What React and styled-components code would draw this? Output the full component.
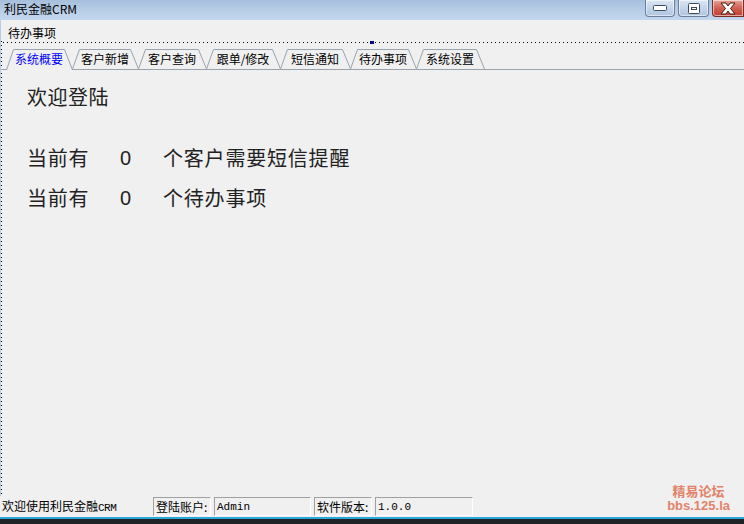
import React from 'react';
import styled, { createGlobalStyle } from 'styled-components';

const GlobalStyle = createGlobalStyle`
  html, body {
    margin: 0;
    padding: 0;
    background: #f0f0f0;
  }
  * {
    box-sizing: border-box;
  }
`;

const tabs = [
  { label: '系统概要', w: 66 },
  { label: '客户新增', w: 66 },
  { label: '客户查询', w: 68 },
  { label: '跟单/修改', w: 74 },
  { label: '短信通知', w: 70 },
  { label: '待办事项', w: 66 },
  { label: '系统设置', w: 68 },
];

const Tab = ({ label, w, active }) => {
  const h = active ? 21 : 20;
  return (
    <TabItem $w={w} $active={active}>
      <TabOutline width={w + 1} height={h} viewBox={`0 0 ${w + 1} ${h}`}>
        <path
          d={`M0.5 ${h} L7.5 0.5 L${w - 7.5} 0.5 L${w + 0.5} ${h}`}
          fill="#f0f0f0"
          stroke="#98a3ae"
          strokeWidth="1"
        />
      </TabOutline>
      <TabLabel $active={active}>{label}</TabLabel>
    </TabItem>
  );
};

const App = () => {
  return (
    <Window>
      <GlobalStyle />
      <TitleBar>
        <TitleText>利民金融CRM</TitleText>
        <Controls>
          <CtrlButton $w={30}>
            <svg width="14" height="6" viewBox="0 0 14 6">
              <rect x="0.5" y="0.5" width="13" height="5" rx="1" fill="#fff" stroke="#3c4a5c" />
            </svg>
          </CtrlButton>
          <CtrlButton $w={31}>
            <svg width="12" height="11" viewBox="0 0 12 11">
              <rect x="0.5" y="0.5" width="11" height="10" rx="1" fill="#fff" stroke="#3c4a5c" />
              <rect x="3" y="4" width="6" height="3" fill="#3c4a5c" />
              <rect x="4" y="5" width="4" height="1" fill="#fff" />
            </svg>
          </CtrlButton>
          <CloseButton>
            <svg width="18" height="13" viewBox="0 0 18 13">
              <path
                d="M2 1 L7 1 L9 4 L11 1 L16 1 L11.5 6.5 L16 12 L11 12 L9 9 L7 12 L2 12 L6.5 6.5 Z"
                fill="#fff"
                stroke="#4a1a14"
                strokeWidth="1"
                strokeLinejoin="round"
              />
            </svg>
          </CloseButton>
        </Controls>
      </TitleBar>

      <Body>
        <MenuBar>
          <MenuItem>待办事项</MenuItem>
        </MenuBar>
        <DotRule>
          <Grip />
        </DotRule>
        <TabStrip>
          {tabs.map((t, i) => (
            <Tab key={t.label} label={t.label} w={t.w} active={i === 0} />
          ))}
        </TabStrip>
        <Page>
          <Heading>欢迎登陆</Heading>
          <InfoList>
            <InfoRow>
              <Lead>当前有</Lead>
              <Count>0</Count>
              <span>个客户需要短信提醒</span>
            </InfoRow>
            <InfoRow>
              <Lead>当前有</Lead>
              <Count>0</Count>
              <span>个待办事项</span>
            </InfoRow>
          </InfoList>
        </Page>
      </Body>

      <StatusBar>
        <StatusText>欢迎使用利民金融<Mono>CRM</Mono></StatusText>
        <Panel $w={58}>登陆账户:</Panel>
        <Panel $w={97} $mono>Admin</Panel>
        <Panel $w={58}>软件版本:</Panel>
        <Panel $w={98} $mono>1.0.0</Panel>
      </StatusBar>
      <TaskEdge />

      <Watermark>{'精易论坛\nbbs.125.la'}</Watermark>
    </Window>
  );
};

export default App;

const Window = styled.div`
  position: relative;
  width: 744px;
  height: 524px;
  display: flex;
  flex-direction: column;
  background: #f0f0f0;
  font-family: "Noto Sans CJK SC", "Liberation Sans", sans-serif;
  color: #000;
  overflow: hidden;
`;

const TitleBar = styled.div`
  height: 20px;
  display: flex;
  align-items: flex-start;
  justify-content: space-between;
  background: linear-gradient(to bottom, #a6bfdc 0%, #b7cde7 50%, #c3d7ee 100%);
`;

const TitleText = styled.div`
  font-size: 12px;
  line-height: 18px;
  padding-left: 4px;
  color: #000;
`;

const Controls = styled.div`
  display: flex;
  gap: 3px;
`;

const CtrlButton = styled.div`
  width: ${p => p.$w}px;
  height: 17px;
  display: flex;
  align-items: center;
  justify-content: center;
  border: 1px solid #6d7f98;
  border-top: none;
  border-radius: 0 0 4px 4px;
  background: linear-gradient(to bottom, #dbe6f3 0%, #c4d5ea 50%, #aec4df 100%);
  box-shadow: inset 0 0 0 1px rgba(255, 255, 255, 0.55);
`;

const CloseButton = styled(CtrlButton).attrs({ $w: 32 })`
  border-color: #7a2a22;
  border-radius: 0 0 0 4px;
  background: linear-gradient(to bottom, #e8a598 0%, #d06050 50%, #c04030 100%);
`;

const Body = styled.div`
  flex: 1;
  display: flex;
  flex-direction: column;
  border-left: 1px solid #b7cde6;
  position: relative;
  background:
    repeating-linear-gradient(to bottom, #000 0 1px, transparent 1px 4px) 0 21px / 1px calc(100% - 22px) no-repeat,
    #f0f0f0;
`;

const MenuBar = styled.div`
  height: 21px;
  display: flex;
  align-items: flex-end;
  padding-left: 7px;
`;

const MenuItem = styled.div`
  font-size: 12px;
  line-height: 16px;
`;

const DotRule = styled.div`
  height: 1px;
  margin-top: 1px;
  background: repeating-linear-gradient(to right, transparent 0 2px, #000 2px 3px, transparent 3px 4px);
  display: flex;
  justify-content: flex-start;
  padding-left: 369px;
`;

const Grip = styled.div`
  width: 4px;
  height: 3px;
  margin-top: -1px;
  background: #000080;
`;

const TabStrip = styled.div`
  height: 27px;
  display: flex;
  align-items: flex-end;
  padding-left: 5px;
  border-bottom: 1px solid #98a3ae;
`;

const TabItem = styled.div`
  position: relative;
  width: ${p => p.$w}px;
  height: ${p => (p.$active ? 21 : 20)}px;
  margin-bottom: ${p => (p.$active ? -1 : 0)}px;
  display: flex;
  align-items: flex-start;
  justify-content: center;
  z-index: ${p => (p.$active ? 2 : 1)};
`;

const TabOutline = styled.svg`
  position: absolute;
  left: 0;
  top: 0;
  overflow: visible;
`;

const TabLabel = styled.span`
  position: relative;
  font-size: 12px;
  line-height: 18px;
  padding-top: 1px;
  color: ${p => (p.$active ? '#0000ff' : '#000')};
`;

const Page = styled.div`
  flex: 1;
  padding: 14px 0 0 26px;
`;

const Heading = styled.div`
  font-size: 20px;
  line-height: 26px;
  letter-spacing: 0.5px;
  color: #222;
`;

const InfoList = styled.div`
  margin-top: 35px;
  display: flex;
  flex-direction: column;
  gap: 14px;
`;

const InfoRow = styled.div`
  display: flex;
  font-size: 20px;
  line-height: 26px;
  letter-spacing: 0.8px;
  color: #222;
`;

const Lead = styled.span`
  width: 93px;
`;

const Count = styled.span`
  width: 43px;
  font-family: "Liberation Sans", sans-serif;
`;

const StatusBar = styled.div`
  height: 21px;
  display: flex;
  align-items: center;
  gap: 3px;
  padding-left: 2px;
  background: #f0f0f0;
`;

const StatusText = styled.div`
  width: 148px;
  font-size: 12px;
  line-height: 18px;
  white-space: nowrap;
`;

const Mono = styled.span`
  font-family: "Liberation Mono", monospace;
  font-size: 11px;
  letter-spacing: -0.5px;
`;

const Panel = styled.div`
  width: ${p => p.$w}px;
  height: 19px;
  display: flex;
  align-items: center;
  padding-left: 2px;
  border-top: 1px solid #a0a0a0;
  border-left: 1px solid #a0a0a0;
  border-right: 1px solid #ffffff;
  border-bottom: 1px solid #ffffff;
  font-size: ${p => (p.$mono ? 11 : 12)}px;
  font-family: ${p => (p.$mono ? '"Liberation Mono", monospace' : '"Noto Sans CJK SC", sans-serif')};
  white-space: nowrap;
`;

const TaskEdge = styled.div`
  height: 7px;
  border-top: 2px solid #2aa7d8;
  background: #1f2326;
`;

const Watermark = styled.div`
  position: absolute;
  right: 14px;
  bottom: 11px;
  white-space: pre-line;
  text-align: center;
  font-family: "Liberation Sans", "Noto Sans CJK SC", sans-serif;
  font-size: 13px;
  font-weight: bold;
  line-height: 14px;
  color: #e3826a;
`;
